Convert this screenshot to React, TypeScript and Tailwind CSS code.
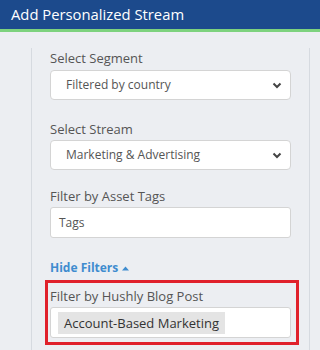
function Label({ children }: { children: React.ReactNode }) {
  return <div className="text-[13px] leading-[20px] text-[#555]">{children}</div>
}

function SelectBox({ value }: { value: string }) {
  return (
    <div className="flex h-[30px] items-center justify-between rounded-[4px] border border-[#d4d4d4] bg-white pl-[15px] pr-[8px] text-[12px] text-[#555]">
      <span>{value}</span>
      <svg width="10" height="7" viewBox="0 0 10 7" className="text-[#444]">
        <polyline points="1.5,1.5 5,5 8.5,1.5" fill="none" stroke="currentColor" strokeWidth="2" />
      </svg>
    </div>
  )
}

export default function App() {
  return (
    <div className="h-[350px] w-[320px] overflow-hidden bg-[#eceef2] font-['Open_Sans',sans-serif]">
      <div className="flex h-[29px] items-center bg-[#1c4a8c] pl-[11px] text-[14.8px] text-white">Add Personalized Stream</div>
      <div className="h-[3px] bg-[#7dd27e]" />
      <div className="pt-[19px]">
        <div className="ml-[31px] mr-[10px] h-[320px] border-x border-[#d6dae0] px-[18px]">
          <div className="-mt-[3px]">
            <Label>Select Segment</Label>
            <div className="mt-[2px]">
              <SelectBox value="Filtered by country" />
            </div>
          </div>
          <div className="mt-[19px]">
            <Label>Select Stream</Label>
            <div className="mt-[1px]">
              <SelectBox value="Marketing & Advertising" />
            </div>
          </div>
          <div className="mt-[16px]">
            <Label>Filter by Asset Tags</Label>
            <div className="mt-[1px] flex h-[31px] items-center rounded-[3px] border border-[#d4d4d4] bg-white pl-[8px] text-[12px] text-[#555]">
              Tags
            </div>
          </div>
          <div className="mt-[20px] flex items-center gap-[4px] text-[12px] font-bold leading-[20px] text-[#3f8ccf]">
            Hide Filters
            <svg width="7" height="5" viewBox="0 0 7 5">
              <polygon points="0,4.5 3.5,0.5 7,4.5" fill="currentColor" />
            </svg>
          </div>
          <div className="-ml-[5px] -mr-[8px] mt-[2px] border-[3px] border-[#e0212b] pb-[4px] pl-[2px] pr-[5px] pt-[3px]">
            <Label>Filter by Hushly Blog Post</Label>
            <div className="mt-[1px] flex h-[31px] items-center rounded-[3px] border border-[#d4d4d4] bg-white pl-[7px]">
              <span className="bg-[#e4e4e4] px-[6px] text-[13px] leading-[22px] text-[#333]">Account-Based Marketing</span>
            </div>
          </div>
        </div>
      </div>
    </div>
  )
}
